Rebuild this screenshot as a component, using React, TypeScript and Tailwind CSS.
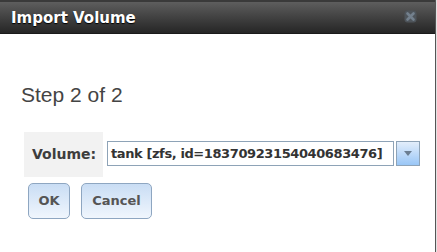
import React from "react";

export default function App() {
  const bold = { fontFamily: '"DejaVu Sans", Verdana, sans-serif' };
  return (
    <div className="w-[437px] h-[252px] bg-white flex overflow-hidden">
      <div className="w-[435px] h-full flex flex-col">
        <div
          className="h-[34px] shrink-0 border-t-2 border-[#3a3a3a] bg-gradient-to-b from-[#5e5e5e] to-[#262626] border-b border-b-[#1b1b1b] flex items-start pt-[7px] pl-[11px] pr-[18px]"
          style={bold}
        >
          <span className="text-[15px] leading-[18px] font-bold text-white [text-shadow:0_1px_1px_#000]">
            Import Volume
          </span>
          <svg className="ml-auto mt-[1px]" width="13" height="13" viewBox="0 0 13 13">
            <rect x="0.5" y="0.5" width="12" height="12" rx="3" fill="#4e545a" />
            <path d="M3.5 3.5 L9.5 9.5 M9.5 3.5 L3.5 9.5" stroke="#73808d" strokeWidth="2.6" strokeLinecap="round" />
          </svg>
        </div>
        <div className="flex flex-col">
          <div
            className="mt-[49px] pl-[21px] text-[21px] leading-[24px] text-[#444]"
            style={{ fontFamily: '"Liberation Sans", Arial, sans-serif' }}
          >
            Step 2 of 2
          </div>
          <div className="mt-[25px] ml-[24px] flex items-start" style={bold}>
            <div className="w-[79px] h-[45px] bg-[#f2f2f2] flex items-center pl-[8px] text-[14px] font-bold text-[#3d3d3d]">
              Volume:
            </div>
            <div className="ml-[4px] mt-[9px] flex items-stretch h-[25px]">
              <div className="w-[287px] border border-[#8ea3b7] bg-white flex items-center pl-[3px] text-[13px] tracking-[-0.4px] font-bold text-[#333] whitespace-nowrap overflow-hidden">
                tank [zfs, id=18370923154040683476]
              </div>
              <div className="ml-[2px] w-[24px] border border-[#8ea3b7] bg-gradient-to-b from-[#e3eefb] to-[#99c6f6] flex items-center justify-center">
                <svg width="8" height="5" viewBox="0 0 8 5">
                  <path d="M0 0 L8 0 L4 5 Z" fill="#6b7e92" />
                </svg>
              </div>
            </div>
          </div>
          <div className="mt-[6px] ml-[28px] flex gap-[11px]" style={bold}>
            <button className="w-[42px] h-[36px] rounded-[5px] border border-[#8ea6c1] bg-gradient-to-b from-[#c9ddf4] to-[#f0f6fd] text-[13px] font-bold text-[#555]">
              OK
            </button>
            <button className="w-[71px] h-[36px] rounded-[5px] border border-[#8ea6c1] bg-gradient-to-b from-[#c9ddf4] to-[#f0f6fd] text-[13px] font-bold text-[#555]">
              Cancel
            </button>
          </div>
        </div>
      </div>
      <div className="w-[1px] h-full bg-[#555]" />
      <div className="w-[1px] h-full bg-[#e2e2e2]" />
    </div>
  );
}
